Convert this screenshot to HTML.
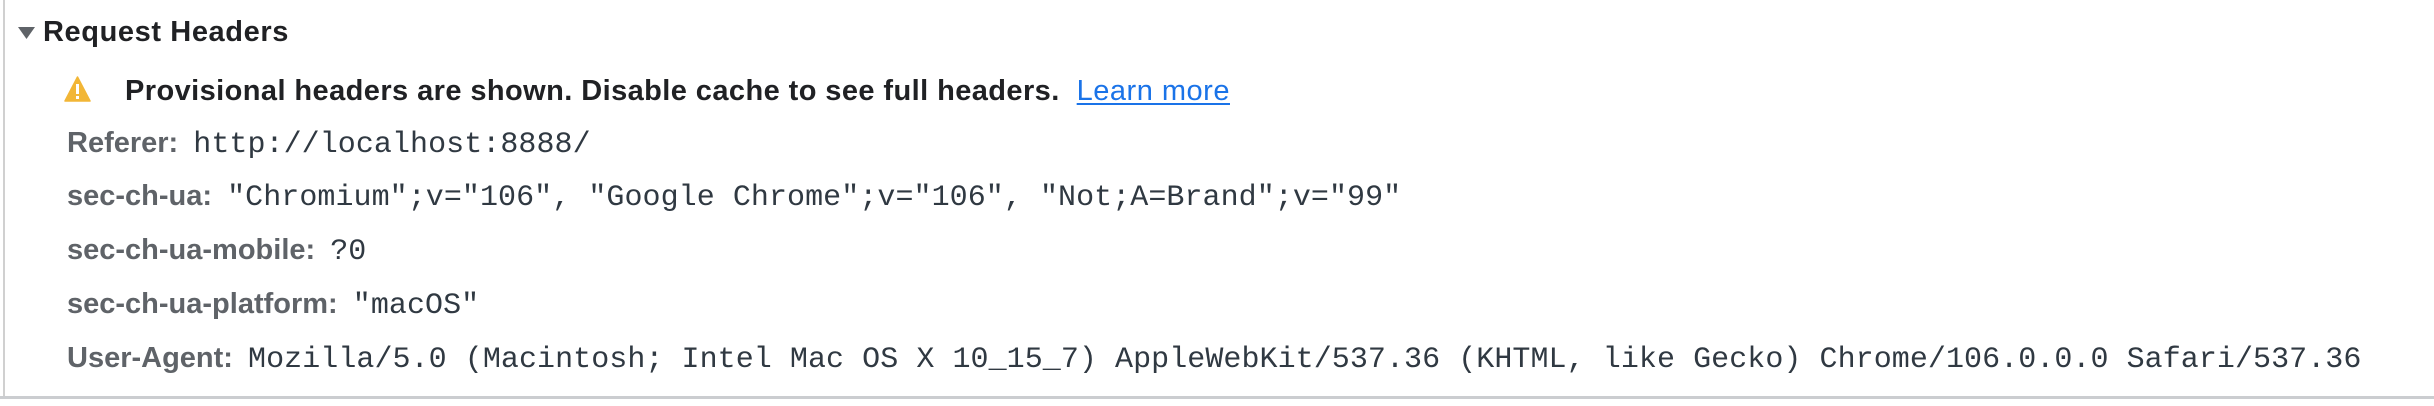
<!DOCTYPE html>
<html><head><meta charset="utf-8"><style>
html,body{margin:0;padding:0;background:#fff;width:2434px;height:406px;overflow:hidden;position:relative}
.l{position:absolute;left:3px;top:0;width:2px;height:397px;background:#d0d0d0}
.b{position:absolute;left:0;top:396px;width:2434px;height:3px;background:#cbcdd0}
.r{position:absolute;white-space:pre;font-family:"Liberation Sans",sans-serif;font-size:29px;line-height:30px}
.k{font-weight:bold;color:#5f6368}
.v{font-family:"Liberation Mono",monospace;font-size:30px;color:#303942;letter-spacing:0.06px;margin-left:7px}
.t{font-weight:bold;color:#202124}
a{color:#1a73e8;text-decoration:underline;text-decoration-thickness:2px;text-underline-offset:3px;letter-spacing:0.5px}
</style></head><body>
<div class="l"></div>
<div class="b"></div>
<svg style="position:absolute;left:18px;top:27px" width="18" height="13"><polygon points="0,0 17,0 8.5,12" fill="#5f6368"/></svg>
<div class="r t" style="left:43px;top:17px;letter-spacing:0.6px">Request Headers</div>
<svg style="position:absolute;left:64px;top:76px" width="27" height="26" viewBox="0 0 27 26"><path d="M13.5 1 L26 25 L1 25 Z" fill="#f2b636" stroke="#f2b636" stroke-width="1.5" stroke-linejoin="round"/><rect x="12" y="8" width="3" height="10" fill="#fff"/><rect x="12" y="20" width="3" height="3" fill="#fff"/></svg>
<div class="r t" style="left:125px;top:76px;letter-spacing:0.42px">Provisional headers are shown. Disable cache to see full headers.  <a style="font-weight:normal">Learn more</a></div>
<div class="r" style="left:67px;top:128px"><span class="k">Referer:</span> <span class="v">http://localhost:8888/</span></div>
<div class="r" style="left:67px;top:181px"><span class="k">sec-ch-ua:</span> <span class="v">"Chromium";v="106", "Google Chrome";v="106", "Not;A=Brand";v="99"</span></div>
<div class="r" style="left:67px;top:235px"><span class="k">sec-ch-ua-mobile:</span> <span class="v">?0</span></div>
<div class="r" style="left:67px;top:289px"><span class="k">sec-ch-ua-platform:</span> <span class="v">"macOS"</span></div>
<div class="r" style="left:67px;top:343px"><span class="k">User-Agent:</span> <span class="v">Mozilla/5.0 (Macintosh; Intel Mac OS X 10_15_7) AppleWebKit/537.36 (KHTML, like Gecko) Chrome/106.0.0.0 Safari/537.36</span></div>
</body></html>
